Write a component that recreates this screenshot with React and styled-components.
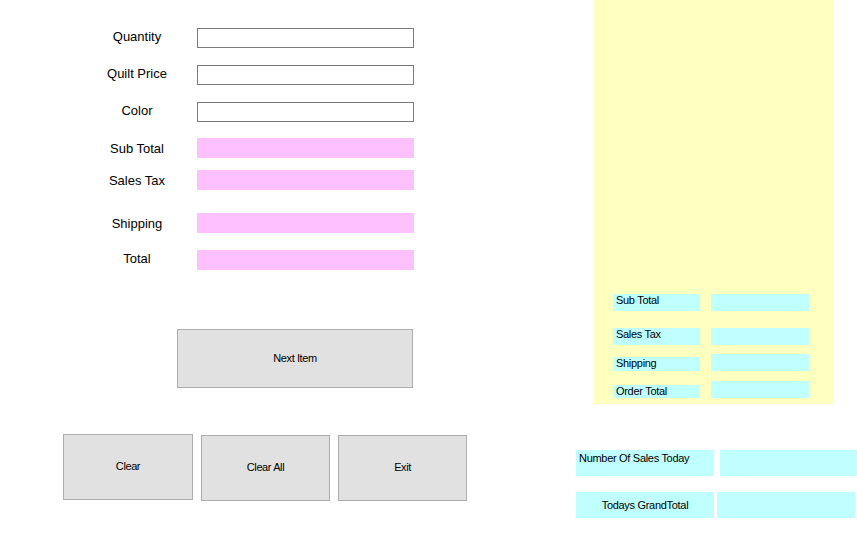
import React from 'react';
import styled, { createGlobalStyle } from 'styled-components';

const GlobalStyle = createGlobalStyle`
  html, body {
    margin: 0;
    padding: 0;
    background: #ffffff;
  }
  body {
    font-family: "Liberation Sans", Arial, sans-serif;
    color: #000000;
  }
`;

const Form = styled.div`
  width: 857px;
  height: 541px;
  overflow: hidden;
  display: flex;
  flex-direction: column;
`;

const Top = styled.div`
  display: flex;
  height: 404px;
`;

const Entry = styled.div`
  width: 594px;
  padding-top: 28px;
  display: flex;
  flex-direction: column;
`;

const Row = styled.div`
  display: flex;
  align-items: center;
  margin-left: 89px;
  margin-top: ${(props) => props.gap || 0}px;
`;

const Label = styled.div`
  width: 96px;
  margin-right: 12px;
  text-align: center;
  font-size: 13px;
  line-height: 16px;
  position: relative;
  top: ${(props) => props.shift || 0}px;
`;

const Box = styled.div`
  width: 217px;
  height: 20px;
  box-sizing: border-box;
  background: ${(props) => (props.output ? '#ffc0ff' : '#ffffff')};
  border: 1px solid ${(props) => (props.output ? '#ffc0ff' : '#7a7a7a')};
`;

const Button = styled.button`
  width: ${(props) => props.w}px;
  height: ${(props) => props.h}px;
  background: #e1e1e1;
  border: 1px solid #adadad;
  border-radius: 0;
  padding: 0 0 2px;
  font-family: "Liberation Sans", Arial, sans-serif;
  font-size: 11px;
  letter-spacing: -0.4px;
  color: #000000;
`;

const NextWrap = styled.div`
  margin-top: 59px;
  margin-left: 177px;
`;

const Summary = styled.div`
  width: 240px;
  height: 404px;
  background: #ffffc0;
  display: flex;
  flex-direction: column;
  padding-top: 294px;
  box-sizing: border-box;
`;

const SumRow = styled.div`
  display: flex;
  align-items: flex-end;
  height: 17px;
  margin-left: 19px;
  margin-top: ${(props) => props.gap || 0}px;
`;

const SumLabel = styled.div`
  width: 87px;
  height: ${(props) => props.h}px;
  margin-right: 11px;
  background: #c0ffff;
  font-size: 11px;
  letter-spacing: -0.3px;
  line-height: 13px;
  padding-left: 3px;
  box-sizing: border-box;
  overflow: hidden;
  white-space: nowrap;
`;

const SumValue = styled.div`
  width: 98px;
  height: ${(props) => props.h || 17}px;
  background: #c0ffff;
`;

const Bottom = styled.div`
  display: flex;
  align-items: flex-start;
`;

const ButtonRow = styled.div`
  display: flex;
  align-items: flex-start;
  gap: 8px;
  margin-top: 31px;
  margin-left: 63px;
`;

const Raised = styled.div`
  margin-top: -1px;
`;

const Daily = styled.div`
  margin-top: 46px;
  margin-left: 109px;
  display: flex;
  flex-direction: column;
  gap: 16px;
`;

const DailyRow = styled.div`
  display: flex;
  gap: ${(props) => props.gap}px;
`;

const DailyLabel = styled.div`
  width: 138px;
  height: 26px;
  background: #c0ffff;
  font-size: 11px;
  letter-spacing: -0.3px;
  box-sizing: border-box;
  white-space: nowrap;
  display: flex;
  justify-content: ${(props) => (props.center ? 'center' : 'flex-start')};
  align-items: ${(props) => (props.center ? 'center' : 'flex-start')};
  padding: ${(props) => (props.center ? '0' : '2px 0 0 3px')};
`;

const DailyValue = styled.div`
  width: ${(props) => props.w}px;
  height: 26px;
  background: #c0ffff;
`;

const fields = [
  { label: 'Quantity', gap: 0, shift: -1 },
  { label: 'Quilt Price', gap: 17, shift: -1 },
  { label: 'Color', gap: 17, shift: -1 },
  { label: 'Sub Total', gap: 16, output: true, shift: 1 },
  { label: 'Sales Tax', gap: 12, output: true, shift: 1 },
  { label: 'Shipping', gap: 23, output: true, shift: 1 },
  { label: 'Total', gap: 17, output: true, shift: -1 },
];

const totals = [
  { label: 'Sub Total', gap: 0, h: 17 },
  { label: 'Sales Tax', gap: 17, h: 17 },
  { label: 'Shipping', gap: 9, h: 14 },
  { label: 'Order Total', gap: 10, h: 13 },
];

export default function App() {
  return (
    <Form>
      <GlobalStyle />
      <Top>
        <Entry>
          {fields.map((f) => (
            <Row key={f.label} gap={f.gap}>
              <Label shift={f.shift}>{f.label}</Label>
              <Box output={f.output} />
            </Row>
          ))}
          <NextWrap>
            <Button w={236} h={59}>Next Item</Button>
          </NextWrap>
        </Entry>
        <Summary>
          {totals.map((t) => (
            <SumRow key={t.label} gap={t.gap}>
              <SumLabel h={t.h}>{t.label}</SumLabel>
              <SumValue />
            </SumRow>
          ))}
        </Summary>
      </Top>
      <Bottom>
        <ButtonRow>
          <Raised>
            <Button w={130} h={66}>Clear</Button>
          </Raised>
          <Button w={129} h={66}>Clear All</Button>
          <Button w={129} h={66}>Exit</Button>
        </ButtonRow>
        <Daily>
          <DailyRow gap={6}>
            <DailyLabel>Number Of Sales Today</DailyLabel>
            <DailyValue w={137} />
          </DailyRow>
          <DailyRow gap={3}>
            <DailyLabel center>Todays GrandTotal</DailyLabel>
            <DailyValue w={138} />
          </DailyRow>
        </Daily>
      </Bottom>
    </Form>
  );
}
